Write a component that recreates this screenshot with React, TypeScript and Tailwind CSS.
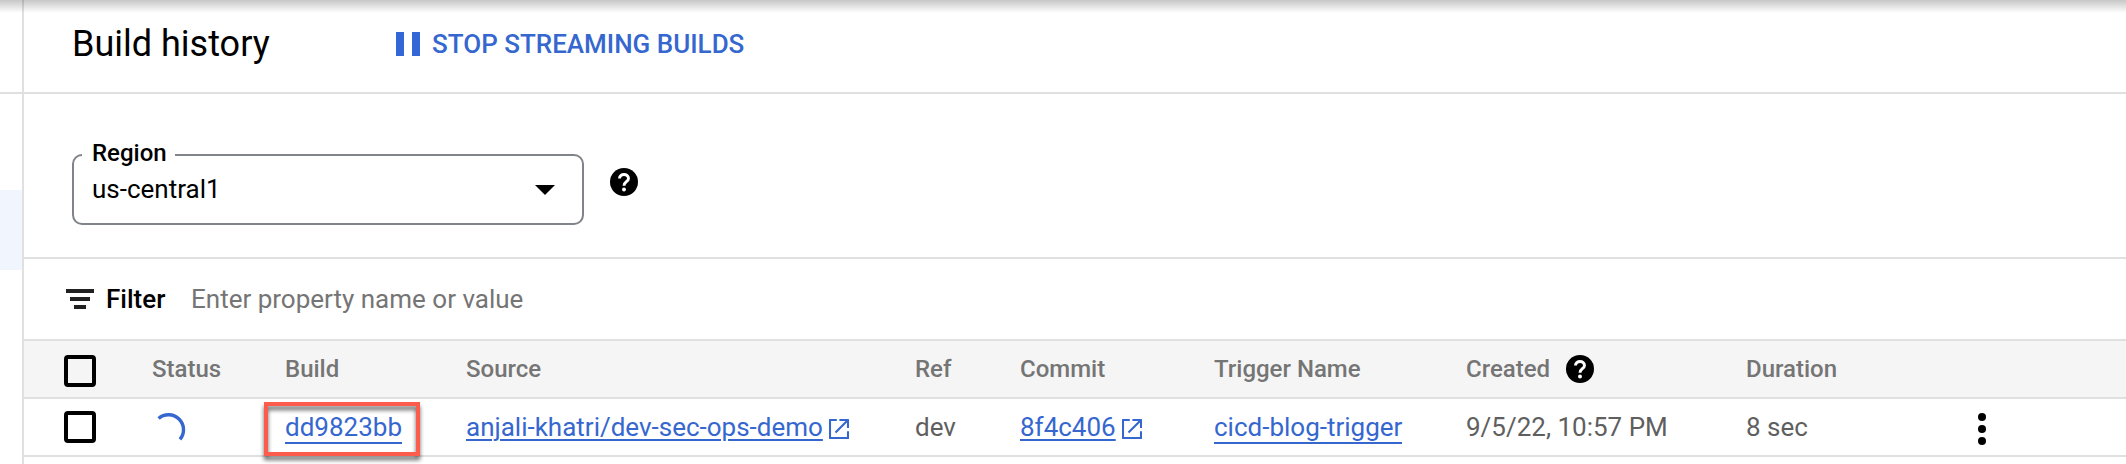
import type { ReactNode } from "react";

function HelpIcon() {
  return (
    <svg className="block h-7 w-7 shrink-0" viewBox="2 2 20 20" fill="none">
      <circle cx="12" cy="12" r="10" fill="#000" />
      <path d="M8.8 9.5C8.8 7.7 10.2 6.6 12 6.6s3.2 1.1 3.2 2.9c0 2.2-3.2 2.5-3.2 5.1" stroke="#fff" strokeWidth="2.1" />
      <circle cx="12" cy="17.4" r="1.4" fill="#fff" />
    </svg>
  );
}

function ExternalIcon() {
  return (
    <svg className="ml-1.5 mt-[3px] block h-5 w-5 shrink-0" viewBox="0 0 20 20" fill="none" stroke="#3567cf" strokeWidth="2.1" strokeLinejoin="round">
      <path d="M7.8 1H1v18h18v-6.8M10.4 1H19v8M19 1L6.5 13.5" />
    </svg>
  );
}

function Checkbox() {
  return <span className="block h-8 w-8 rounded-[4px] border-4 border-black" />;
}

const grid =
  "grid grid-cols-[88px_133px_181px_449px_105px_194px_252px_280px_1fr] items-center pl-10 border-b-2 border-[#e0e0e0] h-[58px]";

function Head({ children }: { children: ReactNode }) {
  return <div className="text-[24px] font-medium text-[#757575]">{children}</div>;
}

export default function App() {
  return (
    <div className="relative flex h-[464px] w-[2126px] overflow-hidden bg-white font-['Roboto',sans-serif] text-[26px] leading-8 whitespace-nowrap text-black">
      <aside className="flex w-6 shrink-0 flex-col border-r-2 border-[#e0e0e0]">
        <div className="h-[94px] border-b-2 border-[#e0e0e0]" />
        <div className="mt-24 h-20 bg-[#f0f5fe]" />
      </aside>
      <main className="flex flex-1 flex-col">
        <header className="flex h-[94px] items-center border-b-2 border-[#e0e0e0] pb-1 pl-12">
          <h1 className="w-[324px] text-[36px]">Build history</h1>
          <button className="flex items-center font-medium text-[#3567cf]">
            <svg className="mr-3 block h-6 w-6" viewBox="0 0 24 24" fill="#3367d6">
              <path d="M0 0h8v24H0zM16 0h8v24h-8z" />
            </svg>
            STOP STREAMING BUILDS
          </button>
        </header>

        <section className="flex h-[165px] items-start border-b-2 border-[#e0e0e0] pl-12 pt-[60px]">
          <div className="relative flex h-[71px] w-[512px] items-center justify-between rounded-[10px] border-2 border-[#808387] pl-[18px] pr-[27px]">
            <span className="absolute -top-[19px] left-2 bg-white pl-[10px] pr-2 text-[24px] font-medium">Region</span>
            <span className="pb-0.5">us-central1</span>
            <svg className="block h-[10px] w-5" viewBox="0 0 20 10">
              <path d="M0 0h20L10 10z" />
            </svg>
          </div>
          <div className="ml-[26px] mt-[14px]">
            <HelpIcon />
          </div>
        </section>

        <section className="flex h-[82px] items-center border-b-2 border-[#e0e0e0] pl-[42px]">
          <svg className="mr-3 block h-5 w-7" viewBox="0 0 28 20" fill="#212121">
            <path d="M0 0h28v4H0zM4 8h20v4H4zM8 16h12v4H8z" />
          </svg>
          <span className="w-[85px] font-medium">Filter</span>
          <span className="text-[#757575]">Enter property name or value</span>
        </section>

        <div className={grid + " bg-[#f5f5f5]"}>
          <div className="pt-1">
            <Checkbox />
          </div>
          <Head>Status</Head>
          <Head>Build</Head>
          <Head>Source</Head>
          <Head>Ref</Head>
          <Head>Commit</Head>
          <Head>Trigger Name</Head>
          <Head>
            <div className="flex items-center">
              <span className="w-[100px]">Created</span>
              <HelpIcon />
            </div>
          </Head>
          <Head>Duration</Head>
        </div>

        <div className={grid + " text-[#5f5f5f]"}>
          <Checkbox />
          <svg className="ml-[2px] block h-8 w-8" viewBox="0 0 32 32" fill="none" stroke="#3567cf" strokeWidth="3.4">
            <path d="M4.6 7.5A15 15 0 0 1 26 28.4" />
          </svg>
          <div className="relative flex">
            <span className="h-[34px] border-b-2 border-[#3567cf] leading-[34px] text-[#3567cf]">dd9823bb</span>
            <span className="absolute -left-[21px] -top-2 h-[54px] w-[156px] border-4 border-[#fb5c4c] drop-shadow-[0_4px_2px_rgba(0,0,0,0.6)]" />
          </div>
          <div className="flex items-center text-[#3567cf]">
            <span className="underline decoration-2 underline-offset-[3px]">anjali-khatri/dev-sec-ops-demo</span>
            <ExternalIcon />
          </div>
          <div>dev</div>
          <div className="flex items-center text-[#3567cf]">
            <span className="underline decoration-2 underline-offset-[3px]">8f4c406</span>
            <ExternalIcon />
          </div>
          <div className="flex">
            <span className="h-[34px] border-b-2 border-[#3567cf] leading-[34px] text-[#3567cf]">cicd-blog-trigger</span>
          </div>
          <div>9/5/22, 10:57 PM</div>
          <div className="flex items-center">
            <span className="w-[232px]">8 sec</span>
            <svg className="mt-1 block h-8 w-2" viewBox="0 0 8 32" fill="#000">
              <circle cx="4" cy="4" r="4" />
              <circle cx="4" cy="16" r="4" />
              <circle cx="4" cy="28" r="4" />
            </svg>
          </div>
        </div>
      </main>
      <div className="absolute inset-x-0 top-0 h-[13px] bg-linear-to-b from-[#00000038] to-transparent" />
    </div>
  );
}
